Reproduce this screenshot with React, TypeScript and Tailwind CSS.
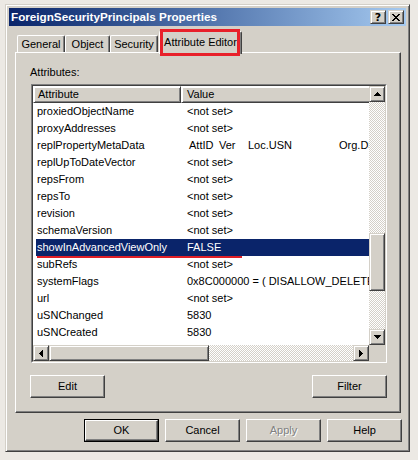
import React from "react";

const raised =
  "bg-[#d4d0c8] border border-t-[#d4d0c8] border-l-[#d4d0c8] border-r-[#404040] border-b-[#404040] shadow-[inset_1px_1px_0_#ffffff,inset_-1px_-1px_0_#808080]";
const pushBtn =
  "bg-[#d4d0c8] border border-t-white border-l-white border-r-[#404040] border-b-[#404040] shadow-[inset_-1px_-1px_0_#808080] flex items-center justify-center";
const checker =
  "bg-[repeating-conic-gradient(#d4d0c8_0%_25%,#ffffff_0%_50%)] bg-size-[2px_2px]";

const ArrowUp = () => (
  <svg width="7" height="4" viewBox="0 0 7 4" shapeRendering="crispEdges">
    <rect x="3" y="0" width="1" height="1" fill="#000" />
    <rect x="2" y="1" width="3" height="1" fill="#000" />
    <rect x="1" y="2" width="5" height="1" fill="#000" />
    <rect x="0" y="3" width="7" height="1" fill="#000" />
  </svg>
);
const ArrowDown = () => (
  <svg width="7" height="4" viewBox="0 0 7 4" shapeRendering="crispEdges">
    <rect x="0" y="0" width="7" height="1" fill="#000" />
    <rect x="1" y="1" width="5" height="1" fill="#000" />
    <rect x="2" y="2" width="3" height="1" fill="#000" />
    <rect x="3" y="3" width="1" height="1" fill="#000" />
  </svg>
);
const ArrowLeft = () => (
  <svg width="4" height="7" viewBox="0 0 4 7" shapeRendering="crispEdges">
    <rect x="0" y="3" width="1" height="1" fill="#000" />
    <rect x="1" y="2" width="1" height="3" fill="#000" />
    <rect x="2" y="1" width="1" height="5" fill="#000" />
    <rect x="3" y="0" width="1" height="7" fill="#000" />
  </svg>
);
const ArrowRight = () => (
  <svg width="4" height="7" viewBox="0 0 4 7" shapeRendering="crispEdges">
    <rect x="0" y="0" width="1" height="7" fill="#000" />
    <rect x="1" y="1" width="1" height="5" fill="#000" />
    <rect x="2" y="2" width="1" height="3" fill="#000" />
    <rect x="3" y="3" width="1" height="1" fill="#000" />
  </svg>
);

type Row = { name: string; value: React.ReactNode; selected?: boolean };

const rows: Row[] = [
  { name: "proxiedObjectName", value: "<not set>" },
  { name: "proxyAddresses", value: "<not set>" },
  {
    name: "replPropertyMetaData",
    value: (
      <span className="flex">
        <span className="w-[32px] shrink-0 pl-[2px]">AttID</span>
        <span className="w-[29px] shrink-0">Ver</span>
        <span className="w-[91px] shrink-0">Loc.USN</span>
        <span className="shrink-0">Org.DSA</span>
      </span>
    ),
  },
  { name: "replUpToDateVector", value: "<not set>" },
  { name: "repsFrom", value: "<not set>" },
  { name: "repsTo", value: "<not set>" },
  { name: "revision", value: "<not set>" },
  { name: "schemaVersion", value: "<not set>" },
  { name: "showInAdvancedViewOnly", value: "FALSE", selected: true },
  { name: "subRefs", value: "<not set>" },
  { name: "systemFlags", value: "0x8C000000 = ( DISALLOW_DELETE | DOMAIN_DISALLOW_RENAME )" },
  { name: "url", value: "<not set>" },
  { name: "uSNChanged", value: "5830" },
  { name: "uSNCreated", value: "5830" },
  { name: "uSNDSALastObjRemoved", value: "" },
];

export default function App() {
  return (
    <div className="relative w-[418px] h-[460px] bg-[#ece9e4] pt-[4px] pl-[5px] font-['Liberation_Sans',Arial,sans-serif] text-[11px] leading-[13px] text-black overflow-hidden">
      {/* Window */}
      <div className="w-[405px] h-[448px] bg-[#d4d0c8] border border-t-[#d4d0c8] border-l-[#d4d0c8] border-r-[#404040] border-b-[#404040] shadow-[inset_1px_1px_0_#ffffff,inset_-1px_-1px_0_#808080] p-[3px] flex flex-col">
        {/* Title bar */}
        <div className="h-[18px] flex items-center bg-gradient-to-r from-[#0a246a] to-[#a6caf0] pl-[2px] pr-[2px]">
          <span className="flex-1 text-white font-bold text-[11.7px] leading-[18px] whitespace-nowrap">
            ForeignSecurityPrincipals Properties
          </span>
          <div className="flex gap-[2px]">
            <div className={`${raised} w-[16px] h-[14px] flex items-center justify-center`}>
              <span className="font-bold text-[11px] leading-[11px] font-['DejaVu_Sans',sans-serif]">?</span>
            </div>
            <div className={`${raised} w-[16px] h-[14px] flex items-center justify-center`}>
              <svg width="8" height="7" viewBox="0 0 8 7" shapeRendering="crispEdges">
                <path d="M0 0h2v1h-2zM6 0h2v1h-2zM1 1h2v1h-2zM5 1h2v1h-2zM2 2h4v1h-4zM3 3h2v1h-2zM2 4h4v1h-4zM1 5h2v1h-2zM5 5h2v1h-2zM0 6h2v1h-2zM6 6h2v1h-2z" fill="#000" />
              </svg>
            </div>
          </div>
        </div>

        {/* Tabs */}
        <div className="mt-[4px] h-[22px] flex items-end pl-[8px]">
          {[
            { label: "General", w: "w-[48px]" },
            { label: "Object", w: "w-[45px]" },
            { label: "Security", w: "w-[48px]" },
          ].map((t) => (
            <div
              key={t.label}
              className={`${t.w} h-[17px] border-t border-l border-t-white border-l-white border-r border-r-[#404040] shadow-[inset_-1px_0_0_#808080] rounded-t-[2px] pt-[2px] text-center whitespace-nowrap`}
            >
              {t.label}
            </div>
          ))}
          <div className="relative z-10 ml-[1px] w-[83px] h-[23px] -mb-[2px] bg-[#d4d0c8] border-t border-l border-t-white border-l-white border-r border-r-[#404040] shadow-[inset_-1px_0_0_#808080] rounded-t-[2px] pt-[4px] text-center whitespace-nowrap">
            Attribute Editor
          </div>
        </div>

        {/* Tab panel */}
        <div className="ml-[6px] w-[386px] h-[361px] border border-t-white border-l-white border-r-[#404040] border-b-[#404040] shadow-[inset_-1px_-1px_0_#808080] pt-[13px] flex flex-col">
          <div className="pl-[14px]">Attributes:</div>
          <div className="mt-[5px] ml-[15px] w-[356px] h-[279px] border border-t-[#808080] border-l-[#808080] border-r-white border-b-white">
            <div className="w-full h-full border border-t-[#404040] border-l-[#404040] border-r-[#d4d0c8] border-b-[#d4d0c8] bg-white flex flex-col">
              <div className="h-[259px] flex">
                {/* content */}
                <div className="w-[336px] flex flex-col overflow-hidden">
                  <div className="h-[17px] flex shrink-0">
                    <div className={`${raised} w-[148px] shrink-0 pl-[4px] leading-[15px] border-t-white border-l-white shadow-[inset_-1px_-1px_0_#808080]`}>
                      Attribute
                    </div>
                    <div className={`${raised} w-[220px] shrink-0 pl-[5px] leading-[15px] border-t-white border-l-white shadow-[inset_-1px_-1px_0_#808080]`}>
                      Value
                    </div>
                  </div>
                  <div className="flex-1 overflow-hidden">
                    {rows.map((r) => (
                      <div key={r.name} className="h-[17px] pl-[3px] flex whitespace-nowrap leading-[17px]">
                        <div
                          className={`relative flex-1 flex ${r.selected ? "bg-[#0a246a] text-white" : ""}`}
                        >
                          <span className="w-[145px] shrink-0 pl-[1px] overflow-hidden">{r.name}</span>
                          <span className="pl-[6px]">{r.value}</span>
                          {r.selected && (
                            <div className="absolute left-[1px] top-[17px] w-[205px] h-[2px] bg-[#e01f26] z-10" />
                          )}
                        </div>
                      </div>
                    ))}
                  </div>
                </div>
                {/* vertical scrollbar */}
                <div className="w-[16px] flex flex-col">
                  <div className={`${raised} h-[16px] flex items-center justify-center`}>
                    <ArrowUp />
                  </div>
                  <div className={`${checker} h-[131px]`} />
                  <div className={`${raised} h-[58px]`} />
                  <div className={`${checker} flex-1`} />
                  <div className={`${raised} h-[16px] flex items-center justify-center`}>
                    <ArrowDown />
                  </div>
                </div>
              </div>
              {/* horizontal scrollbar */}
              <div className="h-[16px] flex">
                <div className={`${raised} w-[16px] flex items-center justify-center`}>
                  <ArrowLeft />
                </div>
                <div className={`${raised} w-[160px]`} />
                <div className={`${checker} w-[144px]`} />
                <div className={`${raised} w-[16px] flex items-center justify-center`}>
                  <ArrowRight />
                </div>
                <div className="flex-1 bg-[#d4d0c8]" />
              </div>
            </div>
          </div>
          <div className="mt-[12px] flex justify-between pl-[14px] pr-[13px]">
            <div className={`${pushBtn} w-[75px] h-[23px]`}>Edit</div>
            <div className={`${pushBtn} w-[75px] h-[23px]`}>Filter</div>
          </div>
        </div>

        {/* Bottom buttons */}
        <div className="mt-[6px] flex justify-end gap-[6px] pr-[4px]">
          <div className="w-[75px] h-[23px] border border-black">
            <div className={`${pushBtn} w-full h-full`}>OK</div>
          </div>
          <div className={`${pushBtn} w-[75px] h-[23px]`}>Cancel</div>
          <div className={`${pushBtn} w-[75px] h-[23px] text-[#808080] [text-shadow:1px_1px_0_#ffffff]`}>Apply</div>
          <div className={`${pushBtn} w-[75px] h-[23px]`}>Help</div>
        </div>
      </div>

      {/* Red annotation box around the tab */}
      <div className="absolute left-[160px] top-[29px] w-[80px] h-[27px] border-[3px] border-[#e8202a] z-20" />
    </div>
  );
}
